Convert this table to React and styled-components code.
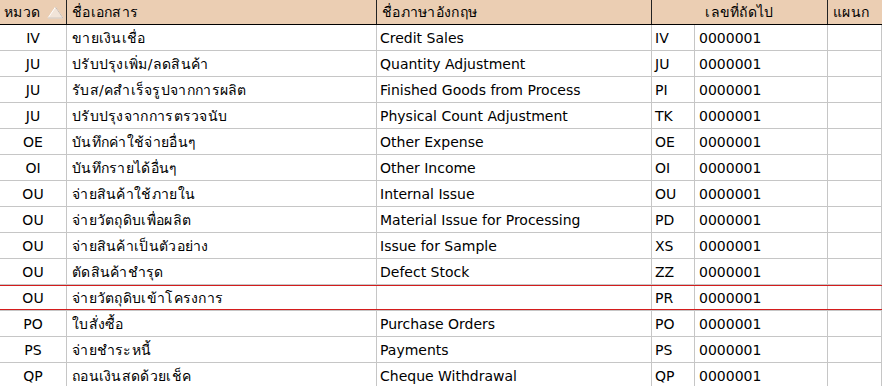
import React from 'react';
import styled, { createGlobalStyle } from 'styled-components';

const GlobalStyle = createGlobalStyle`
  html, body {
    margin: 0;
    padding: 0;
    background: #ffffff;
    overflow: hidden;
  }
  body {
    font-family: Tahoma, "DejaVu Sans", "Noto Sans", sans-serif;
    font-size: 14px;
    color: #000;
  }
`;

const columns = '67px 310px 275px 43px 133px 1fr';

const rows = [
  ['IV', 'ขายเงินเชื่อ', 'Credit Sales', 'IV', '0000001'],
  ['JU', 'ปรับปรุงเพิ่ม/ลดสินค้า', 'Quantity Adjustment', 'JU', '0000001'],
  ['JU', 'รับส/คสำเร็จรูปจากการผลิต', 'Finished Goods from Process', 'PI', '0000001'],
  ['JU', 'ปรับปรุงจากการตรวจนับ', 'Physical Count Adjustment', 'TK', '0000001'],
  ['OE', 'บันทึกค่าใช้จ่ายอื่นๆ', 'Other Expense', 'OE', '0000001'],
  ['OI', 'บันทึกรายได้อื่นๆ', 'Other Income', 'OI', '0000001'],
  ['OU', 'จ่ายสินค้าใช้ภายใน', 'Internal Issue', 'OU', '0000001'],
  ['OU', 'จ่ายวัตถุดิบเพื่อผลิต', 'Material Issue for Processing', 'PD', '0000001'],
  ['OU', 'จ่ายสินค้าเป็นตัวอย่าง', 'Issue for Sample', 'XS', '0000001'],
  ['OU', 'ตัดสินค้าชำรุด', 'Defect Stock', 'ZZ', '0000001'],
  ['OU', 'จ่ายวัตถุดิบเข้าโครงการ', '', 'PR', '0000001'],
  ['PO', 'ใบสั่งซื้อ', 'Purchase Orders', 'PO', '0000001'],
  ['PS', 'จ่ายชำระหนี้', 'Payments', 'PS', '0000001'],
  ['QP', 'ถอนเงินสดด้วยเช็ค', 'Cheque Withdrawal', 'QP', '0000001'],
];

const SELECTED = 10;

const Grid = () => (
  <Wrap>
    <GlobalStyle />
    <HeaderRow>
      <HeadCell $thai>
        <span>หมวด</span>
        <SortIcon width="17" height="13" viewBox="0 0 17 13">
          <path d="M8.5 1 L16 12 L1 12 Z" fill="#f1e4d8" stroke="#ffffff" strokeWidth="1" />
          <path d="M8.5 1 L16 12 L1 12" fill="none" stroke="#c9bbaf" strokeWidth="1" />
        </SortIcon>
      </HeadCell>
      <HeadCell $thai>ชื่อเอกสาร</HeadCell>
      <HeadCell $thai>ชื่อภาษาอังกฤษ</HeadCell>
      <HeadCell $thai $span $center>เลขที่ถัดไป</HeadCell>
      <HeadCell $thai $last>แผนก</HeadCell>
    </HeaderRow>
    {rows.map((r, i) => (
      <Row key={i} $selected={i === SELECTED}>
        <Cell $center>{r[0]}</Cell>
        <Cell $thai>{r[1]}</Cell>
        <Cell $pad={3}>{r[2]}</Cell>
        <Cell $pad={3}>{r[3]}</Cell>
        <Cell $pad={4}>{r[4]}</Cell>
        <Cell />
      </Row>
    ))}
  </Wrap>
);

const Wrap = styled.div`
  width: 882px;
`;

const HeaderRow = styled.div`
  display: grid;
  grid-template-columns: ${columns};
  height: 25px;
  background: #ebceb3;
  border-bottom: 1px solid #000;
  box-sizing: border-box;
`;

const HeadCell = styled.div`
  display: flex;
  align-items: center;
  justify-content: ${p => (p.$center ? 'center' : 'flex-start')};
  gap: 7px;
  padding: 0 0 0 ${p => (p.$center ? 0 : 5)}px;
  border-right: ${p => (p.$last ? 'none' : '1px solid #222')};
  grid-column: ${p => (p.$span ? 'span 2' : 'auto')};
  letter-spacing: ${p => (p.$thai ? '0.3px' : 'normal')};
  white-space: nowrap;
  overflow: hidden;
  &:first-child {
    padding-left: 4px;
  }
`;

const SortIcon = styled.svg`
  display: block;
  margin-top: 1px;
`;

const Row = styled.div`
  position: relative;
  display: grid;
  grid-template-columns: ${columns};
  height: 26px;
  border-bottom: 1px solid #c6c6c6;
  box-sizing: border-box;
  ${p =>
    p.$selected &&
    `
    &::after {
      content: '';
      position: absolute;
      left: 0;
      right: 0;
      top: 0;
      bottom: 0;
      border-top: 1px solid #d41c1c;
      border-bottom: 1px solid #d41c1c;
      pointer-events: none;
    }
  `}
`;

const Cell = styled.div`
  display: flex;
  align-items: center;
  justify-content: ${p => (p.$center ? 'center' : 'flex-start')};
  padding-left: ${p => (p.$center ? 0 : p.$pad || 5)}px;
  border-right: 1px solid #c6c6c6;
  letter-spacing: ${p => (p.$thai ? '0.3px' : 'normal')};
  white-space: nowrap;
  overflow: hidden;
`;

export default Grid;
